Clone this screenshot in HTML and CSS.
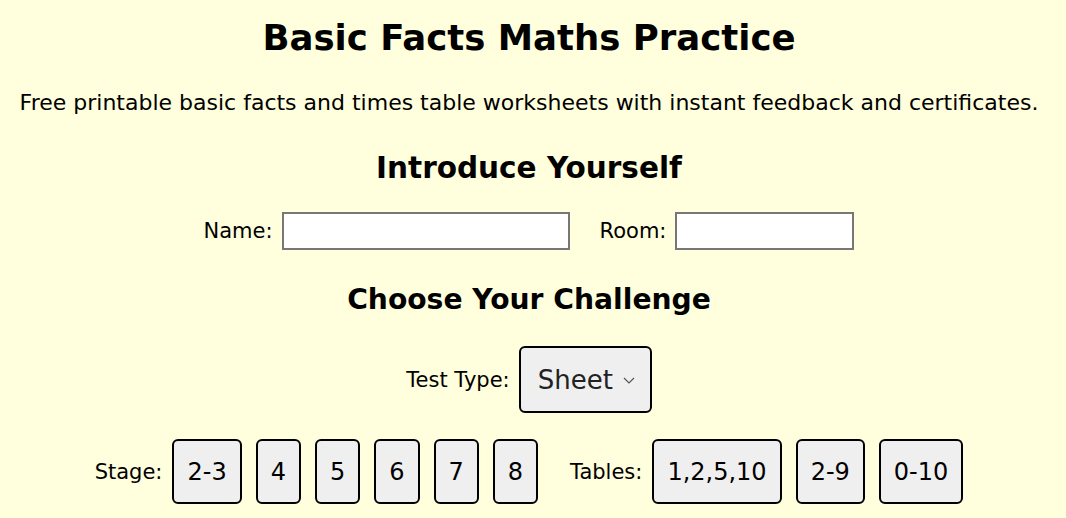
FILE: index.html
```html
<!DOCTYPE html>
<html lang="en">
<head>
  <meta charset="UTF-8">
  <title>Basic Facts Maths Practice</title>
  <link rel="stylesheet" href="styles.css">
</head>
<body>
  <h1>Basic Facts Maths Practice</h1>
  <p class="intro">Free printable basic facts and times table worksheets with instant feedback and certificates.</p>

  <h2>Introduce Yourself</h2>
  <div class="row names">
    <label class="field">Name: <input type="text" id="name" class="name-input"></label>
    <label class="field">Room: <input type="text" id="room" class="room-input"></label>
  </div>

  <h2 class="challenge">Choose Your Challenge</h2>
  <div class="row type">
    <label class="field">Test Type:
      <span class="select-wrap">
        <select id="test-type">
          <option>Sheet</option>
          <option>Online</option>
        </select>
        <svg class="chevron" width="12" height="7" viewBox="0 0 12 7"><path d="M1 1l5 5 5-5" fill="none" stroke="#555" stroke-width="1.2"/></svg>
      </span>
    </label>
  </div>

  <div class="row choices">
    <div class="group">
      <span class="label">Stage:</span>
      <button>2-3</button>
      <button>4</button>
      <button>5</button>
      <button>6</button>
      <button>7</button>
      <button>8</button>
    </div>
    <div class="group">
      <span class="label">Tables:</span>
      <button>1,2,5,10</button>
      <button>2-9</button>
      <button>0-10</button>
    </div>
  </div>
</body>
</html>
```

FILE: styles.css
```css
body {
  font-family: "Comic Sans MS", "DejaVu Sans", sans-serif;
  background-color: #ffffdd;
  color: #000;
  margin: 0;
  padding: 0 16px 0 8px;
  text-align: center;
}
h1 {
  font-size: 35.5px;
  margin: 16px 0 0;
  line-height: 44px;
}
.intro {
  font-size: 22px;
  margin: 29px 0 0;
  line-height: 28px;
}
h2 {
  font-size: 29.5px;
  margin: 33px 0 0;
  line-height: 36px;
}
h2.challenge {
  font-size: 28.2px;
  margin-top: 32px;
}
.row {
  display: flex;
  justify-content: center;
  align-items: center;
  gap: 30px;
}
.names {
  margin-top: 26px;
}
.type {
  margin-top: 28px;
}
.field, .label {
  font-size: 21px;
}
.field {
  display: flex;
  align-items: center;
  gap: 9px;
}
input {
  height: 38px;
  box-sizing: border-box;
  border: 2px solid #777;
  background: #fff;
  font-size: 18px;
  padding: 2px 6px;
}
.name-input {
  width: 288px;
}
.room-input {
  width: 179px;
}
.select-wrap {
  position: relative;
  display: inline-block;
}
select {
  appearance: none;
  font-family: inherit;
  font-size: 26px;
  height: 67px;
  width: 133px;
  box-sizing: border-box;
  padding: 0 30px 0 17px;
  border: 2px solid #000;
  border-radius: 6px;
  background: #efefef;
  color: #222;
  cursor: pointer;
}
.chevron {
  position: absolute;
  right: 17px;
  top: 31px;
  pointer-events: none;
}
.choices {
  gap: 32px;
  margin-top: 26px;
}
.group {
  display: flex;
  align-items: center;
  gap: 14px;
}
.group .label {
  margin-right: -4px;
}
button {
  font-family: inherit;
  font-size: 24px;
  height: 65px;
  box-sizing: border-box;
  padding: 0 13px;
  border: 2px solid #000;
  border-radius: 6px;
  background: #efefef;
  color: #000;
  cursor: pointer;
}
button:hover {
  background: #e2e2e2;
}
```
